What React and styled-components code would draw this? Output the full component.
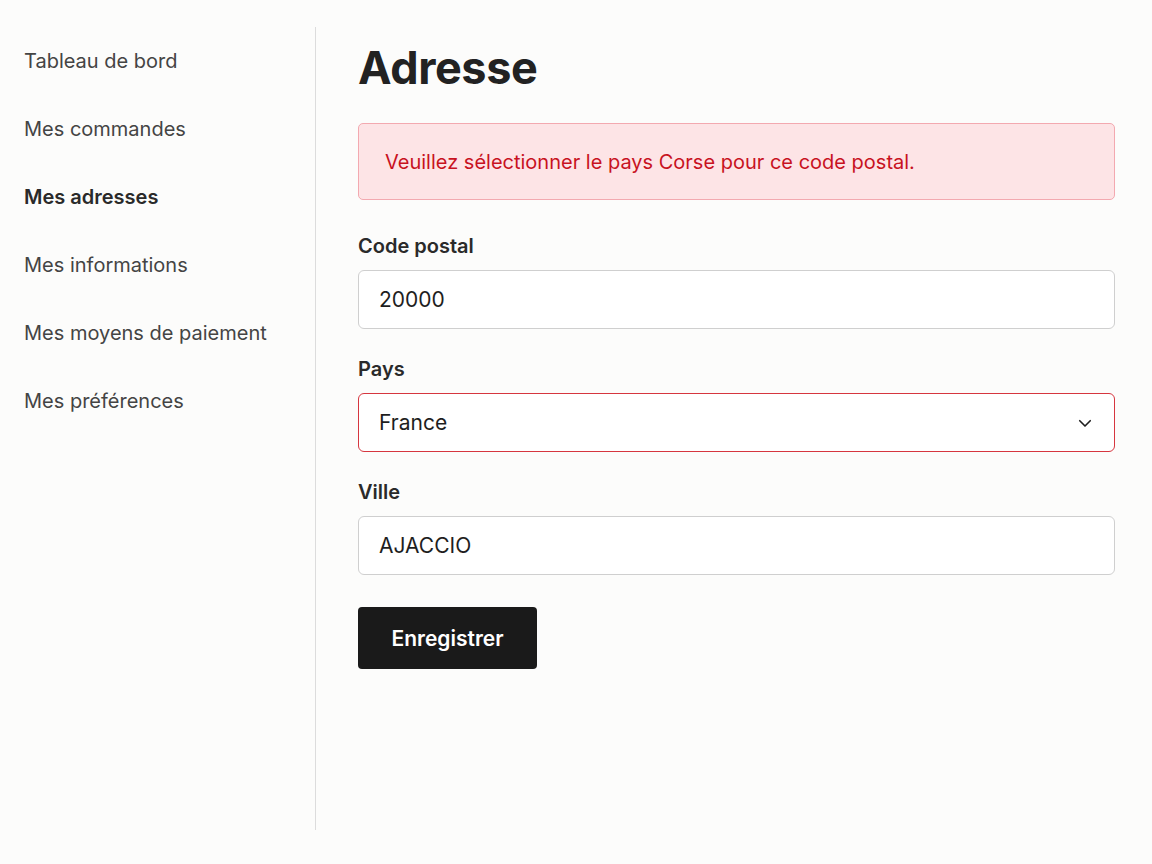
import React from 'react';
import styled, { createGlobalStyle } from 'styled-components';

const GlobalStyle = createGlobalStyle`
  html, body {
    margin: 0;
    padding: 0;
    background: #fcfcfb;
  }
  body {
    font-family: Inter, "Noto Sans", "Liberation Sans", sans-serif;
    color: #222;
  }
`;

const Page = styled.div`
  display: flex;
  padding-top: 27px;
  min-height: 864px;
  box-sizing: border-box;
`;

const Sidebar = styled.nav`
  width: 316px;
  height: 803px;
  border-right: 1px solid #dcdcdc;
  display: flex;
  flex-direction: column;
  box-sizing: border-box;
`;

const NavItem = styled.a`
  display: flex;
  align-items: center;
  height: 68px;
  padding-left: 24px;
  font-size: 20px;
  color: #444;
  font-weight: ${p => (p.$active ? 600 : 400)};
  ${p => p.$active && 'color: #2a2a2a;'}
  text-decoration: none;
  cursor: pointer;
`;

const Main = styled.main`
  flex: 0 0 757px;
  margin-left: 42px;
  display: flex;
  flex-direction: column;
`;

const Title = styled.h1`
  margin: 14px 0 28px;
  font-size: 45px;
  line-height: 54px;
  font-weight: 700;
  color: #222;
  letter-spacing: -0.4px;
`;

const Alert = styled.div`
  height: 77px;
  box-sizing: border-box;
  display: flex;
  align-items: center;
  padding: 0 26px;
  background: #fde4e6;
  border: 1px solid #f3a9b0;
  border-radius: 5px;
  color: #c8121f;
  font-size: 20px;
  margin-bottom: 34px;
`;

const Field = styled.div`
  display: flex;
  flex-direction: column;
  margin-bottom: 28px;
`;

const Label = styled.label`
  font-size: 20px;
  line-height: 24px;
  font-weight: 600;
  color: #2a2a2a;
  margin-bottom: 12px;
`;

const Input = styled.div`
  position: relative;
  height: 59px;
  box-sizing: border-box;
  display: flex;
  align-items: center;
  padding: 0 20px;
  background: #fff;
  border: ${p => (p.$error ? '1.5px solid #d6363f' : '1.5px solid #cfcfcf')};
  border-radius: 6px;
  font-size: 21px;
  color: #1e1e1e;
`;

const Chevron = styled.svg`
  position: absolute;
  right: 20px;
  top: 50%;
  transform: translateY(-50%);
`;

const Button = styled.button`
  margin-top: 4px;
  align-self: flex-start;
  width: 179px;
  height: 62px;
  border: none;
  border-radius: 4px;
  background: #1a1a1a;
  color: #fff;
  font-family: inherit;
  font-size: 21px;
  font-weight: 600;
  cursor: pointer;
`;

const NAV = [
  'Tableau de bord',
  'Mes commandes',
  'Mes adresses',
  'Mes informations',
  'Mes moyens de paiement',
  'Mes préférences',
];

export default function App() {
  return (
    <>
      <GlobalStyle />
      <Page>
        <Sidebar>
          {NAV.map(label => (
            <NavItem key={label} $active={label === 'Mes adresses'}>
              {label}
            </NavItem>
          ))}
        </Sidebar>
        <Main>
          <Title>Adresse</Title>
          <Alert>Veuillez sélectionner le pays Corse pour ce code postal.</Alert>
          <Field>
            <Label>Code postal</Label>
            <Input>20000</Input>
          </Field>
          <Field>
            <Label>Pays</Label>
            <Input $error>
              France
              <Chevron width="18" height="18" viewBox="0 0 24 24" fill="none" stroke="#1e1e1e" strokeWidth="2.2" strokeLinecap="round" strokeLinejoin="round">
                <path d="M5 9l7 7 7-7" />
              </Chevron>
            </Input>
          </Field>
          <Field>
            <Label>Ville</Label>
            <Input>AJACCIO</Input>
          </Field>
          <Button>Enregistrer</Button>
        </Main>
      </Page>
    </>
  );
}
